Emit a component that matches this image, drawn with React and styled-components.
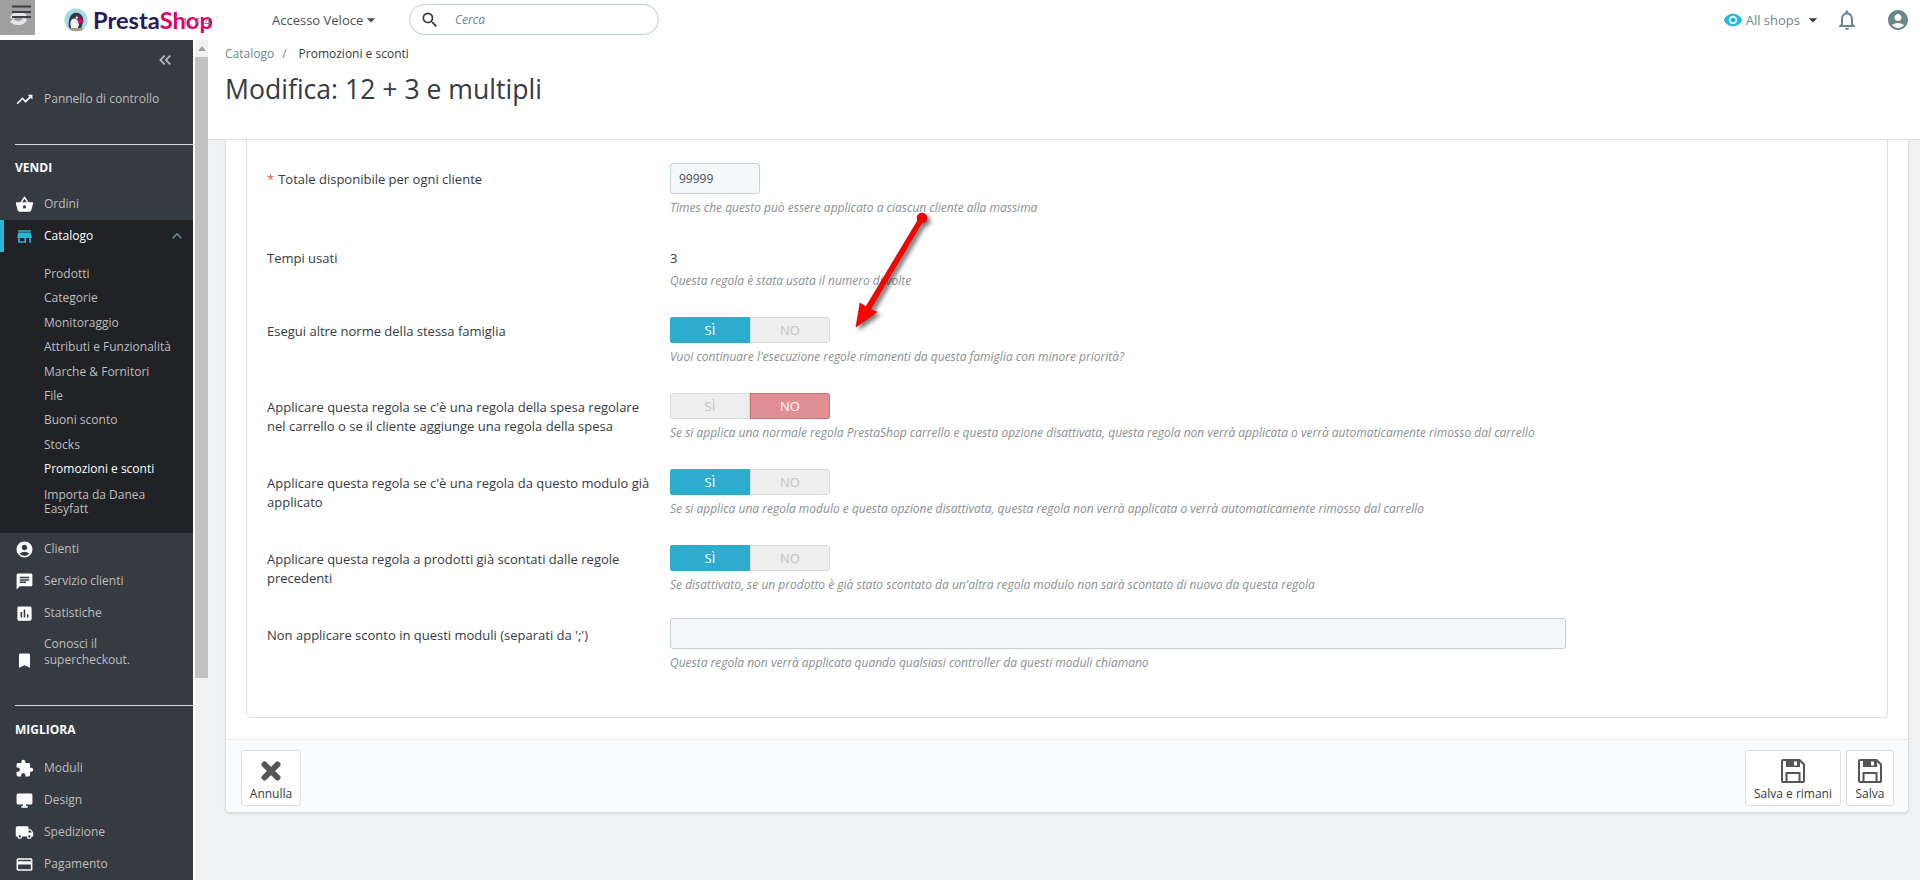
import React from 'react';
import styled, { createGlobalStyle } from 'styled-components';
import {
  MdTrendingUp, MdShoppingBasket, MdStore, MdAccountCircle, MdChat, MdAssessment,
  MdBookmark, MdExtension, MdDesktopWindows, MdLocalShipping, MdCreditCard,
  MdExpandLess, MdKeyboardDoubleArrowLeft, MdArrowDropDown, MdSearch,
  MdVisibility, MdNotificationsNone,
} from 'react-icons/md';

const GlobalStyle = createGlobalStyle`
  html, body { margin: 0; height: 100%; overflow: hidden; }
  body { font-family: "Open Sans", "Liberation Sans", sans-serif; color: #363a41; background: #eff1f2; }
  * { box-sizing: border-box; }
`;

const Page = styled.div`
  width: 1920px;
  height: 880px;
  overflow: hidden;
  display: flex;
  flex-direction: column;
`;

const Header = styled.header`
  height: 40px;
  flex: none;
  background: #fff;
  display: flex;
  align-items: flex-start;
`;

const MenuSquare = styled.div`
  width: 35px;
  height: 35px;
  background: #9f9f9f;
  svg { display: block; }
`;

const Logo = styled.div`
  position: relative;
  margin-left: 29px;
  margin-top: 5px;
  width: 158px;
  height: 30px;
  display: flex;
  align-items: center;
  gap: 5px;
`;

const LogoText = styled.span`
  font-family: "Lato", sans-serif;
  font-weight: 700;
  font-size: 23.7px;
  color: #251b5b;
  em { font-style: normal; color: #df0067; }
`;

const Version = styled.span`
  position: absolute;
  left: 118px;
  top: 9px;
  font-size: 11px;
  letter-spacing: 1px;
  color: #6c868e;
`;

const QuickAccess = styled.div`
  margin-left: 50px;
  width: 107px;
  height: 40px;
  display: flex;
  align-items: center;
  font-size: 13px;
  color: #4a4f57;
  white-space: nowrap;
  svg { margin-left: -2px; font-size: 20px; flex: none; }
`;

const Search = styled.div`
  margin-left: 30px;
  margin-top: 4px;
  width: 250px;
  height: 31px;
  border: 1px solid #bbcdd2;
  border-radius: 16px;
  display: flex;
  align-items: center;
  padding-left: 10px;
  font-size: 12px;
  font-style: italic;
  color: #6c868e;
  svg { font-size: 20px; color: #363a41; margin-right: 15px; }
`;

const HeaderRight = styled.div`
  margin-left: auto;
  height: 40px;
  display: flex;
  align-items: center;
  padding-right: 10px;
`;

const ShopPicker = styled.div`
  display: flex;
  align-items: center;
  font-size: 13px;
  color: #6c868e;
  margin-right: 12px;
  svg:first-child { font-size: 20px; color: #25b9d7; margin-right: 3px; }
  svg:last-child { font-size: 20px; color: #363a41; margin-left: 3px; }
`;

const BellIcon = styled(MdNotificationsNone)`
  font-size: 24px;
  color: #6c868e;
  margin-right: 27px;
`;

const AvatarIcon = styled(MdAccountCircle)`
  font-size: 24px;
  color: #6c868e;
`;

const Body = styled.div`
  flex: 1;
  min-height: 0;
  display: flex;
`;

const Sidebar = styled.nav`
  width: 193px;
  flex: none;
  background: #363a41;
  overflow: hidden;
  font-size: 12px;
  color: #bebebe;
`;

const CollapseRow = styled.div`
  height: 20px;
  margin-top: 10px;
  padding-right: 18px;
  display: flex;
  justify-content: flex-end;
  align-items: center;
  color: #bebebe;
  svg { font-size: 20px; }
`;

const Divider = styled.div`
  height: 1px;
  margin: ${({ $top }) => $top}px 0 0 15px;
  background: #d5dadb;
`;

const SectionTitle = styled.div`
  height: 18px;
  line-height: 18px;
  margin: ${({ $lower }) => ($lower ? '15px 0 13px 15px' : '14px 0 11px 15px')};
  color: #fff;
  font-weight: 700;
  font-size: 12px;
`;

const NavItem = styled.div`
  position: relative;
  min-height: 32px;
  display: flex;
  align-items: center;
  padding-left: 15px;
  color: ${({ $active }) => ($active ? '#fff' : '#bebebe')};
  line-height: 16px;
  ${({ $active }) => $active && `
    &::before { content: ''; position: absolute; left: 0; top: 0; bottom: 0; width: 4px; background: #25b9d7; }
  `}
  & > svg:first-child {
    flex: none;
    font-size: 19px;
    margin-right: 10px;
    color: ${({ $active }) => ($active ? '#25b9d7' : '#fff')};
  }
`;

const DashboardItem = styled(NavItem)`
  margin-top: 13px;
`;

const Chevron = styled(MdExpandLess)`
  position: absolute;
  right: 6px;
  top: 6px;
  font-size: 20px;
  color: #6c868e;
`;

const CatalogGroup = styled.div`
  background: #202226;
  height: 313px;
`;

const SubList = styled.div`
  padding: 10px 0 0 44px;
`;

const SubItem = styled.div`
  min-height: 24.4px;
  line-height: ${({ $double }) => ($double ? '14px' : '24.4px')};
  padding-top: ${({ $double }) => ($double ? '6px' : '0')};
  color: ${({ $active }) => ($active ? '#fff' : '#bebebe')};
`;

const TallItem = styled(NavItem)`
  margin-top: 7px;
  & > svg:first-child { transform: translateY(8px); }
`;

const ScrollTrack = styled.div`
  width: 15px;
  flex: none;
  background: #f1f1f1;
  border-left: 2px solid #fff;
  display: flex;
  flex-direction: column;
  align-items: center;
`;

const ScrollArrow = styled.div`
  width: 0;
  height: 0;
  margin: 6px 0;
  border-left: 4px solid transparent;
  border-right: 4px solid transparent;
  border-bottom: 5px solid #a3a3a3;
`;

const ScrollThumb = styled.div`
  width: 13px;
  height: 621px;
  background: #c1c1c1;
`;

const Main = styled.main`
  flex: 1;
  min-width: 0;
  display: flex;
  flex-direction: column;
`;

const PageHead = styled.div`
  height: 100px;
  flex: none;
  background: #fff;
  border-bottom: 1px solid #dfdfdf;
  padding: 5px 0 0 17px;
`;

const Breadcrumb = styled.div`
  font-size: 12px;
  line-height: 18px;
  color: #6c868e;
  span { margin: 0 12px 0 8px; }
  b { font-weight: 400; color: #363a41; }
`;

const Title = styled.h1`
  margin: 8px 0 0;
  font-size: 26.6px;
  line-height: 36px;
  font-weight: 400;
  color: #363a41;
`;

const Panel = styled.section`
  margin: 0 11px 0 17px;
  background: #fff;
  border: 1px solid #dfdfdf;
  border-top: 0;
  border-radius: 0 0 5px 5px;
  box-shadow: 0 1px 2px rgba(0, 0, 0, 0.1);
`;

const InnerBox = styled.div`
  margin: 0 20px 21px 20px;
  padding: 23px 20px 42px;
  border: 1px solid #dfdfdf;
  border-top: 0;
  border-radius: 0 0 5px 5px;
`;

const Row = styled.div`
  display: grid;
  grid-template-columns: 403px 1fr;
  margin-bottom: ${({ $gap }) => ($gap === undefined ? 24 : $gap)}px;
`;

const Label = styled.div`
  font-size: 13px;
  line-height: 19px;
  padding-top: ${({ $offset }) => $offset || 5}px;
  padding-right: 20px;
  color: #363a41;
  i { font-style: normal; color: #d9573f; margin-right: 4px; }
`;

const Input = styled.div`
  width: ${({ $width }) => $width}px;
  height: 31px;
  border: 1px solid #c3d3d7;
  border-radius: 3px;
  background: #f5f8f9;
  font-size: 12px;
  line-height: 29px;
  padding-left: 8px;
  color: #4a4f57;
`;

const StaticValue = styled.div`
  height: 23px;
  padding-top: 4px;
  font-size: 13px;
  line-height: 20px;
`;

const Switch = styled.div`
  width: 160px;
  height: 26px;
  display: grid;
  grid-template-columns: 1fr 1fr;
  border-radius: 3px;
  overflow: hidden;
`;

const SwitchSide = styled.div`
  display: flex;
  align-items: center;
  justify-content: center;
  font-size: 13px;
  font-weight: ${({ $on }) => ($on ? 500 : 400)};
  color: ${({ $on }) => ($on ? '#fff' : '#c4c4c4')};
  background: ${({ $on, $color }) => ($on ? $color : '#eee')};
  box-shadow: inset 0 0 0 1px ${({ $on, $edge }) => ($on ? $edge : '#dcdcdc')};
`;

const Help = styled.div`
  margin-top: 2px;
  height: 24px;
  font-size: 12px;
  line-height: 24px;
  font-style: italic;
  color: #8a8f92;
  white-space: nowrap;
`;

const PanelFooter = styled.div`
  height: 73px;
  border-top: 1px solid #e8eaeb;
  background: #fafbfc;
  border-radius: 0 0 5px 5px;
  padding: 10px 14px 0 15px;
  display: flex;
  gap: 5px;
`;

const FooterButton = styled.div`
  width: ${({ $width }) => $width}px;
  height: 56px;
  border: 1px solid #dcdfe0;
  border-radius: 3px;
  background: #fff;
  display: flex;
  flex-direction: column;
  align-items: center;
  font-size: 12px;
  color: #363a41;
  white-space: nowrap;
  ${({ $push }) => $push && 'margin-left: auto;'}
  svg { margin-top: 8px; margin-bottom: 2px; flex: none; }
`;

const ArrowLayer = styled.svg`
  position: absolute;
  left: 850px;
  top: 205px;
  overflow: visible;
  pointer-events: none;
`;

function MenuGlyph() {
  return (
    <svg width="35" height="35" viewBox="0 0 35 35">
      <path d="M10 18c1-4 4-6 9-6 3 0 6 1 8 3l-3 3c-2-1-3-2-5-2-3 0-4 1-5 3zM27 19c-1 4-4 6-9 6-3 0-6-1-8-3l3-3c2 1 3 2 5 2 3 0 4-1 5-3z" fill="#e4e4e4" />
      <path d="M12 6.500h19M12 12h19M12 17h19" stroke="#3d4248" strokeWidth="2" />
    </svg>
  );
}

function Penguin() {
  return (
    <svg width="24" height="24" viewBox="0 0 30 30">
      <circle cx="15" cy="15" r="14.5" fill="#a6dde4" />
      <path d="M6 24C5 14 8 6 15 6s9 6 9 9-2 10-4 12H10z" fill="#33384a" />
      <path d="M9 25c-2-6-1-11 3-12 4 0 6 3 7 7l-2 6z" fill="#f3f3f3" />
      <path d="M18 10l7 7-7 3z" fill="#df0067" />
      <circle cx="16" cy="12" r="1.5" fill="#fff" />
      <path d="M6 25h18l-2 3.5H9z" fill="#a89874" />
    </svg>
  );
}

function CrossGlyph() {
  return (
    <svg width="24" height="24" viewBox="0 0 24 24">
      <path d="M5.500 5.500l13 13M18.500 5.500l-13 13" stroke="#555" strokeWidth="6" strokeLinecap="round" />
    </svg>
  );
}

function FloppyGlyph() {
  return (
    <svg width="24" height="24" viewBox="0 0 24 24">
      <path fillRule="evenodd" fill="#555" d="M2 0h17l5 5v17a2 2 0 0 1-2 2H2a2 2 0 0 1-2-2V2a2 2 0 0 1 2-2zM2 2v20h2.500v-9h15v9H22V6l-3-3v5H5V2zM6.500 15v7h11v-7zM13 2.500v4h3v-4z" />
    </svg>
  );
}

const subItems = ['Prodotti', 'Categorie', 'Monitoraggio', 'Attributi e Funzionalità', 'Marche & Fornitori', 'File', 'Buoni sconto', 'Stocks'];

function Toggle({ on }) {
  return on ? (
    <Switch>
      <SwitchSide $on $color="#2eacce" $edge="#2eacce">SÌ</SwitchSide>
      <SwitchSide>NO</SwitchSide>
    </Switch>
  ) : (
    <Switch>
      <SwitchSide>SÌ</SwitchSide>
      <SwitchSide $on $color="#e08f95" $edge="#c9727a">NO</SwitchSide>
    </Switch>
  );
}

export default function App() {
  return (
    <>
      <GlobalStyle />
      <Page>
        <Header>
          <MenuSquare><MenuGlyph /></MenuSquare>
          <Logo>
            <Penguin />
            <LogoText>Presta<em>Shop</em></LogoText>
            <Version>1.7.4</Version>
          </Logo>
          <QuickAccess>Accesso Veloce <MdArrowDropDown /></QuickAccess>
          <Search><MdSearch />Cerca</Search>
          <HeaderRight>
            <ShopPicker><MdVisibility />All shops<MdArrowDropDown /></ShopPicker>
            <BellIcon />
            <AvatarIcon />
          </HeaderRight>
        </Header>
        <Body>
          <Sidebar>
            <CollapseRow><MdKeyboardDoubleArrowLeft /></CollapseRow>
            <DashboardItem><MdTrendingUp />Pannello di controllo</DashboardItem>
            <Divider $top={29} />
            <SectionTitle>VENDI</SectionTitle>
            <NavItem><MdShoppingBasket />Ordini</NavItem>
            <CatalogGroup>
              <NavItem $active><MdStore />Catalogo<Chevron /></NavItem>
              <SubList>
                {subItems.map((s) => <SubItem key={s}>{s}</SubItem>)}
                <SubItem $active>Promozioni e sconti</SubItem>
                <SubItem $double>Importa da Danea<br />Easyfatt</SubItem>
              </SubList>
            </CatalogGroup>
            <NavItem><MdAccountCircle />Clienti</NavItem>
            <NavItem><MdChat />Servizio clienti</NavItem>
            <NavItem><MdAssessment />Statistiche</NavItem>
            <TallItem><MdBookmark /><span>Conosci il<br />supercheckout.</span></TallItem>
            <Divider $top={37} />
            <SectionTitle $lower>MIGLIORA</SectionTitle>
            <NavItem><MdExtension />Moduli</NavItem>
            <NavItem><MdDesktopWindows />Design</NavItem>
            <NavItem><MdLocalShipping />Spedizione</NavItem>
            <NavItem><MdCreditCard />Pagamento</NavItem>
          </Sidebar>
          <ScrollTrack>
            <ScrollArrow />
            <ScrollThumb />
          </ScrollTrack>
          <Main>
            <PageHead>
              <Breadcrumb>Catalogo<span>/</span><b>Promozioni e sconti</b></Breadcrumb>
              <Title>Modifica: 12 + 3 e multipli</Title>
            </PageHead>
            <Panel>
              <InnerBox>
                <Row>
                  <Label $offset={7}><i>*</i>Totale disponibile per ogni cliente</Label>
                  <div>
                    <Input $width={90}>99999</Input>
                    <Help>Times che questo può essere applicato a ciascun cliente alla massima</Help>
                  </div>
                </Row>
                <Row>
                  <Label>Tempi usati</Label>
                  <div>
                    <StaticValue>3</StaticValue>
                    <Help>Questa regola è stata usata il numero di volte</Help>
                  </div>
                </Row>
                <Row>
                  <Label>Esegui altre norme della stessa famiglia</Label>
                  <div>
                    <Toggle on />
                    <Help>Vuoi continuare l'esecuzione regole rimanenti da questa famiglia con minore priorità?</Help>
                  </div>
                </Row>
                <Row>
                  <Label>Applicare questa regola se c'è una regola della spesa regolare nel carrello o se il cliente aggiunge una regola della spesa</Label>
                  <div>
                    <Toggle />
                    <Help>Se si applica una normale regola PrestaShop carrello e questa opzione disattivata, questa regola non verrà applicata o verrà automaticamente rimosso dal carrello</Help>
                  </div>
                </Row>
                <Row>
                  <Label>Applicare questa regola se c'è una regola da questo modulo già applicato</Label>
                  <div>
                    <Toggle on />
                    <Help>Se si applica una regola modulo e questa opzione disattivata, questa regola non verrà applicata o verrà automaticamente rimosso dal carrello</Help>
                  </div>
                </Row>
                <Row $gap={21}>
                  <Label>Applicare questa regola a prodotti già scontati dalle regole precedenti</Label>
                  <div>
                    <Toggle on />
                    <Help>Se disattivato, se un prodotto è già stato scontato da un'altra regola modulo non sarà scontato di nuovo da questa regola</Help>
                  </div>
                </Row>
                <Row $gap={0}>
                  <Label $offset={8}>Non applicare sconto in questi moduli (separati da ';')</Label>
                  <div>
                    <Input $width={896} />
                    <Help>Questa regola non verrà applicata quando qualsiasi controller da questi moduli chiamano</Help>
                  </div>
                </Row>
              </InnerBox>
              <PanelFooter>
                <FooterButton $width={60}><CrossGlyph />Annulla</FooterButton>
                <FooterButton $width={96} $push><FloppyGlyph />Salva e rimani</FooterButton>
                <FooterButton $width={48}><FloppyGlyph />Salva</FooterButton>
              </PanelFooter>
            </Panel>
          </Main>
        </Body>
        <ArrowLayer width="90" height="130" viewBox="0 0 90 130">
          <defs>
            <filter id="arrowShadow" x="-30%" y="-30%" width="160%" height="160%">
              <feDropShadow dx="3" dy="3" stdDeviation="2" floodColor="#000" floodOpacity="0.55" />
            </filter>
          </defs>
          <g filter="url(#arrowShadow)" fill="#f00" stroke="#b00000" strokeWidth="0.6">
            <circle cx="72" cy="13" r="5" />
            <path d="M69.900 11.700 L74.100 14.300 L20.500 104.500 L27 107 L6 122 L10 98 L15.900 101.700 Z" />
          </g>
        </ArrowLayer>
      </Page>
    </>
  );
}
